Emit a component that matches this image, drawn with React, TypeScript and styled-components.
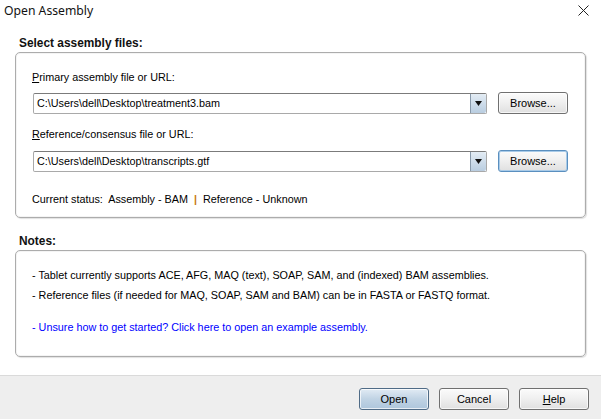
import React from "react";
import styled, { createGlobalStyle } from "styled-components";

const Global = createGlobalStyle`
  html, body { margin: 0; padding: 0; background: #ffffff; }
  body { font-family: "Liberation Sans", Arial, sans-serif; }
`;

const Dialog = styled.div`
  width: 601px;
  height: 419px;
  display: flex;
  flex-direction: column;
  background: #ffffff;
  color: #000;
  font-family: "Liberation Sans", Arial, sans-serif;
  font-size: 10.8px;
  overflow: hidden;
`;

const TitleBar = styled.div`
  height: 21px;
  display: flex;
  align-items: center;
  justify-content: space-between;
  padding: 0 12px 0 4px;
`;

const Title = styled.span`
  font-family: "Noto Sans", sans-serif;
  font-size: 12.2px;
  line-height: 21px;
  color: #111;
`;

const CloseIcon = styled.svg`
  width: 11px;
  height: 11px;
`;

const Main = styled.div`
  flex: 1;
  display: flex;
  flex-direction: column;
  padding: 0 15px;
`;

const Heading = styled.div<{ $h: number }>`
  height: ${(p) => p.$h}px;
  display: flex;
  align-items: flex-end;
  padding: 0 0 1px 4px;
  font-weight: bold;
  font-size: 11.9px;
  line-height: 16px;
  color: #111;
  box-sizing: border-box;
`;

const Panel = styled.div<{ $pt: number; $pb: number }>`
  border: 1px solid #acacac;
  border-radius: 5px;
  box-shadow: 1px 1px 1px rgba(0, 0, 0, 0.12), inset 0 0 0 1px #f4f4f4;
  padding: ${(p) => p.$pt}px 17px ${(p) => p.$pb}px 16px;
  display: flex;
  flex-direction: column;
`;

const Label = styled.div<{ $mt?: number }>`
  line-height: 16px;
  margin-top: ${(p) => p.$mt ?? 0}px;
`;

const Row = styled.div<{ $mt: number }>`
  display: flex;
  align-items: center;
  gap: 11px;
  margin-top: ${(p) => p.$mt}px;
  height: 22px;
`;

const Combo = styled.div`
  flex: 1;
  margin-left: 1px;
  height: 21px;
  display: flex;
  box-sizing: border-box;
  border: 1px solid #a9a9a9;
  border-top-color: #7b7b7b;
  border-radius: 2px;
  background: #fff;
`;

const ComboText = styled.div`
  flex: 1;
  padding-left: 3px;
  line-height: 19px;
  white-space: nowrap;
  overflow: hidden;
`;

const ComboArrow = styled.div`
  width: 15px;
  display: flex;
  align-items: center;
  justify-content: center;
  border-left: 1px solid #8899aa;
  border-radius: 0 2px 2px 0;
  background: linear-gradient(#e3ecf4, #b9cde0);
`;

const Button = styled.button<{ $focused?: boolean; $default?: boolean }>`
  width: 70px;
  height: 22px;
  box-sizing: border-box;
  padding: 0;
  font-family: "Liberation Sans", Arial, sans-serif;
  font-size: 11px;
  color: #000;
  border-radius: 3px;
  border: 1px solid ${(p) => (p.$focused ? "#5a8fbf" : p.$default ? "#4f6b86" : "#707070")};
  background: ${(p) =>
    p.$default
      ? "linear-gradient(#e1ebf4, #c0d3e4 50%, #aec6dc)"
      : "linear-gradient(#fbfbfb, #efefef 50%, #e0e0e0)"};
  box-shadow: ${(p) =>
    p.$focused ? "inset 0 0 0 1px #a9cbe8" : "inset 0 0 0 1px rgba(255,255,255,0.7)"};
`;

const Status = styled.div`
  line-height: 16px;
  margin-top: 19px;
  white-space: pre;
`;

const Pipe = styled.span`
  color: #c97a10;
  font-weight: bold;
`;

const Note = styled.div<{ $mt?: number; $link?: boolean }>`
  line-height: 20px;
  margin-top: ${(p) => p.$mt ?? 0}px;
  color: ${(p) => (p.$link ? "#0000ff" : "#000")};
  white-space: nowrap;
`;

const Spacer = styled.div`
  flex: 1;
`;

const Footer = styled.div`
  height: 44px;
  box-sizing: border-box;
  border-top: 1px solid #dadada;
  background: #eeeeee;
  display: flex;
  justify-content: flex-end;
  align-items: flex-start;
  gap: 10px;
  padding: 12px 12px 0 0;
`;

const Arrow = () => (
  <svg width="7" height="5" viewBox="0 0 7 5">
    <path d="M0 0 H7 L3.5 5 Z" fill="#111" />
  </svg>
);

export default function App() {
  return (
    <Dialog>
      <Global />
      <TitleBar>
        <Title>Open Assembly</Title>
        <CloseIcon viewBox="0 0 11 11">
          <path d="M0.5 0.5 L10.5 10.5 M10.5 0.5 L0.5 10.5" stroke="#222" strokeWidth="1" />
        </CloseIcon>
      </TitleBar>
      <Main>
        <Heading $h={31}>Select assembly files:</Heading>
        <Panel $pt={16} $pb={10}>
          <Label>
            <u>P</u>rimary assembly file or URL:
          </Label>
          <Row $mt={7}>
            <Combo>
              <ComboText>C:\Users\dell\Desktop\treatment3.bam</ComboText>
              <ComboArrow>
                <Arrow />
              </ComboArrow>
            </Combo>
            <Button>Browse...</Button>
          </Row>
          <Label $mt={12}>
            <u>R</u>eference/consensus file or URL:
          </Label>
          <Row $mt={8}>
            <Combo>
              <ComboText>C:\Users\dell\Desktop\transcripts.gtf</ComboText>
              <ComboArrow>
                <Arrow />
              </ComboArrow>
            </Combo>
            <Button $focused>Browse...</Button>
          </Row>
          <Status>
            Current status:  Assembly - BAM  <Pipe>|</Pipe>  Reference - Unknown
          </Status>
        </Panel>
        <Heading $h={32}>Notes:</Heading>
        <Panel $pt={14} $pb={19}>
          <Note>- Tablet currently supports ACE, AFG, MAQ (text), SOAP, SAM, and (indexed) BAM assemblies.</Note>
          <Note>- Reference files (if needed for MAQ, SOAP, SAM and BAM) can be in FASTA or FASTQ format.</Note>
          <Note $mt={12} $link>
            - Unsure how to get started? Click here to open an example assembly.
          </Note>
        </Panel>
        <Spacer />
      </Main>
      <Footer>
        <Button $default>Open</Button>
        <Button>Cancel</Button>
        <Button>
          <u>H</u>elp
        </Button>
      </Footer>
    </Dialog>
  );
}
